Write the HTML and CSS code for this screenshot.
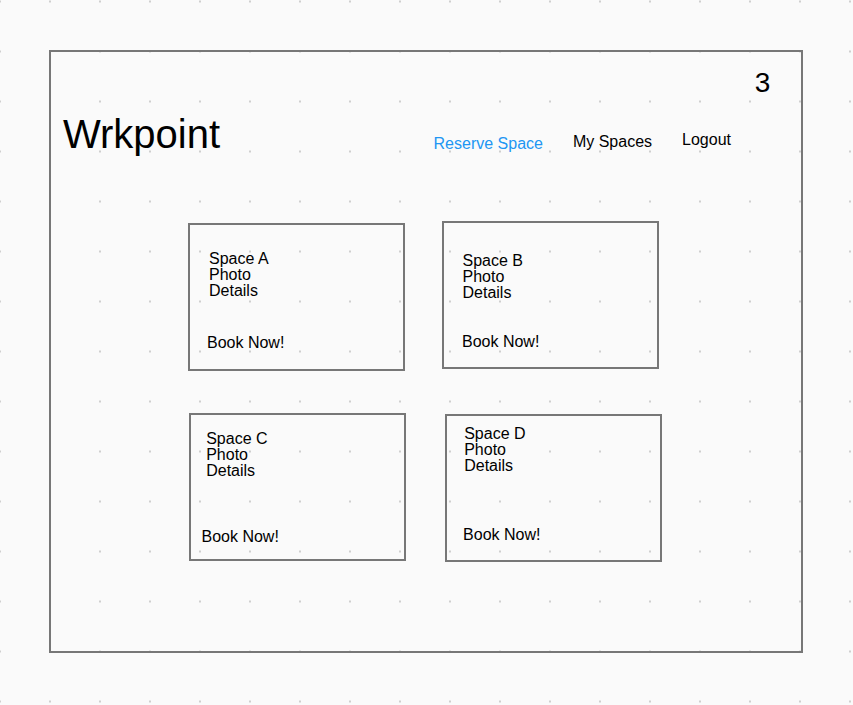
FILE: index.html
```html
<!DOCTYPE html>
<html lang="en">
<head>
<meta charset="utf-8">
<title>Wrkpoint</title>
<link rel="stylesheet" href="styles.css">
</head>
<body>
<div class="frame">
  <div class="pager"><span class="page-num">3</span></div>
  <header class="header">
    <div class="logo">Wrkpoint</div>
    <nav class="nav">
      <a class="nav-link nav-reserve" href="#">Reserve Space</a>
      <a class="nav-link nav-spaces" href="#">My Spaces</a>
      <a class="nav-link nav-logout" href="#">Logout</a>
    </nav>
  </header>
  <main class="cards">
    <div class="card card-a">
      <div class="info"><div>Space A</div><div>Photo</div><div>Details</div></div>
      <div class="book">Book Now!</div>
    </div>
    <div class="card card-b">
      <div class="info"><div>Space B</div><div>Photo</div><div>Details</div></div>
      <div class="book">Book Now!</div>
    </div>
    <div class="card card-c">
      <div class="info"><div>Space C</div><div>Photo</div><div>Details</div></div>
      <div class="book">Book Now!</div>
    </div>
    <div class="card card-d">
      <div class="info"><div>Space D</div><div>Photo</div><div>Details</div></div>
      <div class="book">Book Now!</div>
    </div>
  </main>
</div>
</body>
</html>
```

FILE: styles.css
```css
html, body {
  margin: 0;
  height: 100%;
}

body {
  box-sizing: border-box;
  padding: 50px 0 0 49px;
  background-color: #fafafa;
  background-image: radial-gradient(circle at center, #cfcfcf 0, #cfcfcf 1px, rgba(250,250,250,0) 1.4px);
  background-size: 50px 50px;
  background-position: -25px -23.5px;
  font-family: "Liberation Sans", Arial, Helvetica, sans-serif;
  color: #000;
  overflow: hidden;
}

.frame {
  box-sizing: border-box;
  width: 754px;
  height: 603px;
  border: 2px solid #777;
}

.pager {
  display: flex;
  justify-content: flex-end;
  padding-right: 30.6px;
  padding-top: 17.3px;
}

.page-num {
  font-size: 28px;
  line-height: 28px;
}

.header {
  display: flex;
  align-items: flex-start;
  padding-left: 12px;
  padding-right: 70px;
}

.logo {
  font-size: 40px;
  line-height: 40px;
  margin-top: 17px;
}

.nav {
  margin-left: auto;
  display: flex;
  align-items: flex-start;
  gap: 30px;
}

.nav-link {
  font-size: 16px;
  line-height: 16px;
  color: #000;
  text-decoration: none;
}

.nav-reserve {
  color: #2196f3;
  margin-top: 38.5px;
}

.nav-spaces {
  margin-top: 36.8px;
}

.nav-logout {
  margin-top: 34.5px;
}

.cards {
  display: grid;
  grid-template-columns: 217px 217px;
  column-gap: 37px;
  row-gap: 42px;
  align-items: start;
  justify-items: start;
  margin-top: 67px;
  padding-left: 137px;
}

.card {
  box-sizing: border-box;
  width: 217px;
  height: 148px;
  border: 2px solid #777;
  font-size: 16px;
  line-height: 16px;
}

.info,
.book {
  white-space: nowrap;
}

.card-a { margin-top: 2px; padding-top: 25.5px; }
.card-a .info { padding-left: 19px; }
.card-a .book { padding-left: 17px; margin-top: 36.3px; }

.card-b { padding-top: 30.2px; }
.card-b .info { padding-left: 18.5px; }
.card-b .book { padding-left: 18px; margin-top: 32.4px; }

.card-c { margin-left: 1px; padding-top: 15.5px; }
.card-c .info { padding-left: 15.2px; }
.card-c .book { padding-left: 10.5px; margin-top: 50px; }

.card-d { margin-left: 3px; margin-top: 1px; padding-top: 9.5px; }
.card-d .info { padding-left: 17.2px; }
.card-d .book { padding-left: 16.1px; margin-top: 53.3px; }
```
